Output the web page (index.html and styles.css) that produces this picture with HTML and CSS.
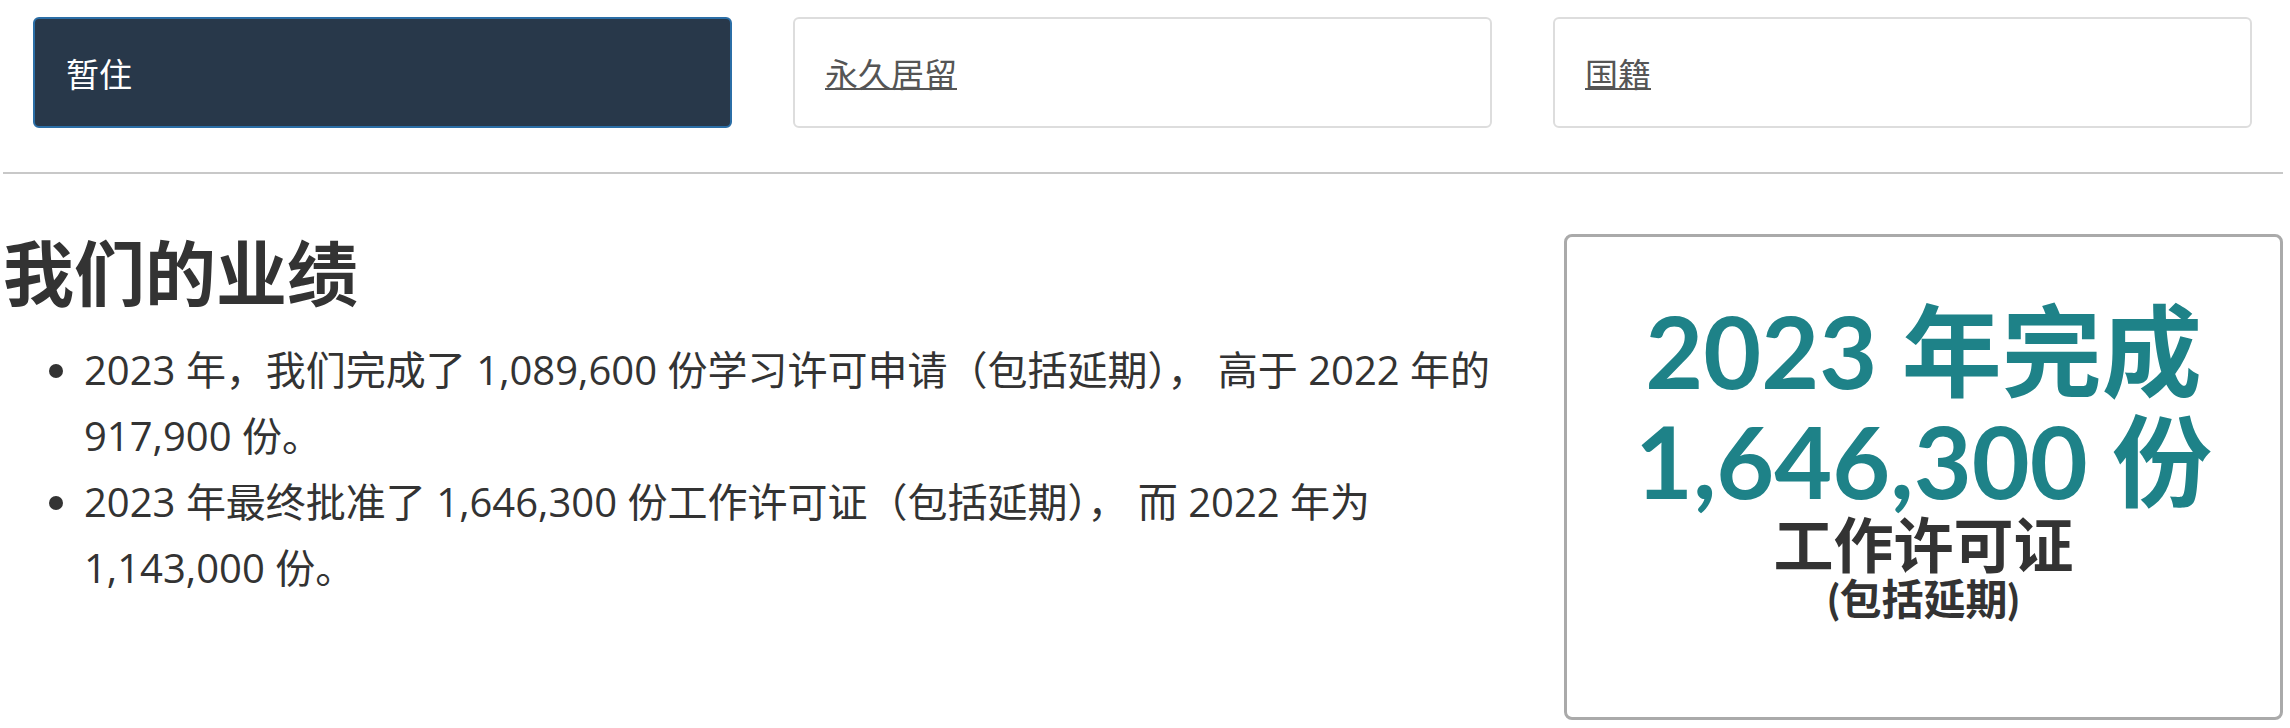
FILE: index.html
```html
<!DOCTYPE html>
<html lang="zh-CN">
<head>
<meta charset="utf-8">
<title>我们的业绩</title>
<link rel="stylesheet" href="styles.css">
</head>
<body>
<div class="page">
  <nav class="tabs">
    <div class="tab tab-active">暂住</div>
    <div class="tab"><a href="#" class="tab-link">永久居留</a></div>
    <div class="tab"><a href="#" class="tab-link">国籍</a></div>
  </nav>
  <hr class="rule">
  <section class="results">
    <div class="results-text">
      <h2 class="heading">我们的业绩</h2>
      <ul class="list">
        <li>2023 年，我们完成了 1,089,600 份学习许可申请（包括延期）， 高于 2022 年的 917,900 份。</li>
        <li>2023 年最终批准了 1,646,300 份工作许可证（包括延期）， 而 2022 年为 1,143,000 份。</li>
      </ul>
    </div>
    <div class="stat-box">
      <div class="stat-number">2023 年完成<br>1,646,300 份</div>
      <div class="stat-label">工作许可证</div>
      <div class="stat-sub">(包括延期)</div>
    </div>
  </section>
</div>
</body>
</html>
```
FILE: styles.css
```css
html, body {
  margin: 0;
  padding: 0;
  background: #ffffff;
}
body {
  font-family: "Open Sans", "Noto Sans CJK SC", sans-serif;
  color: #333333;
}
.page {
  margin: 0 7px 0 3px;
}
.tabs {
  display: grid;
  grid-template-columns: 1fr 1fr 1fr;
  column-gap: 61px;
  padding: 17px 31px 0 30px;
}
.tab {
  height: 111px;
  box-sizing: border-box;
  border: 2px solid #dddddd;
  border-radius: 6px;
  display: flex;
  align-items: center;
  padding-left: 30px;
  font-family: "Noto Sans CJK SC", sans-serif;
  font-size: 33px;
  background: #ffffff;
}
.tab-active {
  background: #28384a;
  border-color: #2b6ea6;
  color: #ffffff;
  padding-left: 31px;
}
.tab-link {
  color: #555555;
  text-decoration: underline;
  text-decoration-thickness: 2px;
}
.rule {
  margin: 44px 0 0;
  border: 0;
  height: 2px;
  background: #c8c8c8;
}
.results {
  display: flex;
  align-items: flex-start;
  gap: 30px;
}
.results-text {
  flex: 1;
  min-width: 0;
}
.heading {
  margin: 53px 0 0;
  font-family: "Noto Sans CJK SC", sans-serif;
  font-size: 71px;
  line-height: 85px;
  font-weight: 700;
  color: #333333;
}
.list {
  margin: 25px 0 0;
  padding-left: 81px;
  font-size: 40px;
  line-height: 66px;
}
.stat-box {
  flex: 0 0 719px;
  box-sizing: border-box;
  height: 486px;
  margin-top: 60px;
  border: 3px solid #aaaaaa;
  border-radius: 8px;
  padding-top: 58px;
  text-align: center;
  font-family: "Lato", "Noto Sans CJK SC", sans-serif;
  font-weight: 700;
}
.stat-number {
  font-size: 100px;
  line-height: 110px;
  color: #1e8288;
}
.stat-label {
  font-size: 60px;
  line-height: 60px;
  color: #333333;
}
.stat-sub {
  font-size: 42px;
  line-height: 42px;
  margin-top: 3px;
  color: #333333;
}
```
